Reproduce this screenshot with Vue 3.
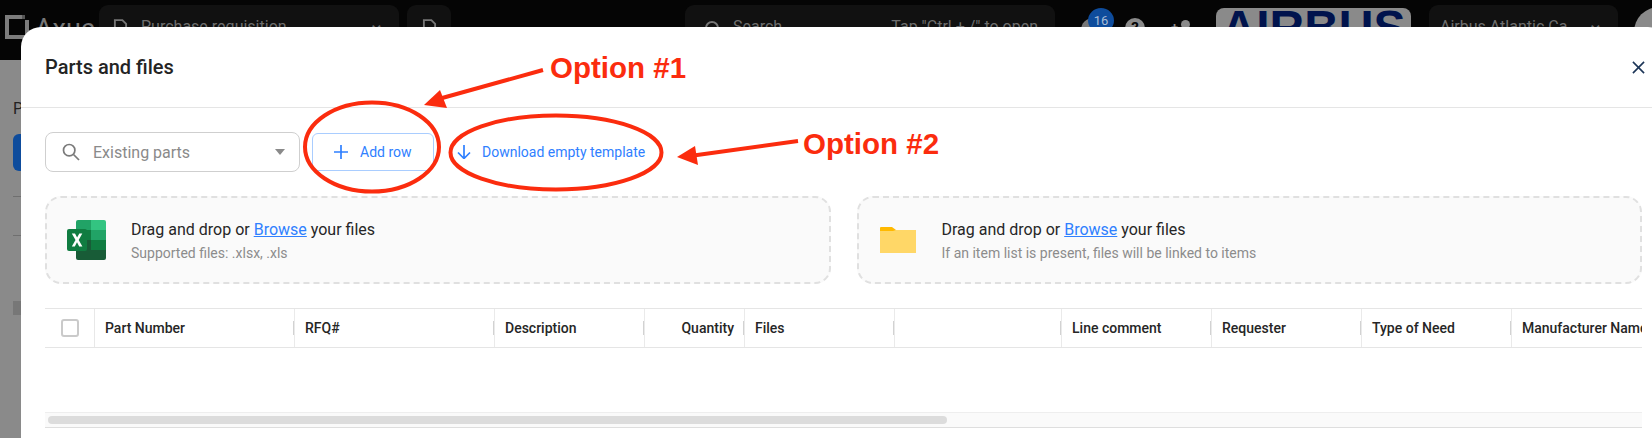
<script setup>
const columns = [
  { label: 'Part Number', width: 200 },
  { label: 'RFQ#', width: 200 },
  { label: 'Description', width: 150 },
  { label: 'Quantity', width: 100, right: true },
  { label: 'Files', width: 150 },
  { label: '', width: 167 },
  { label: 'Line comment', width: 150 },
  { label: 'Requester', width: 150 },
  { label: 'Type of Need', width: 150 },
  { label: 'Manufacturer Name', width: 150 },
]
</script>

<template>
  <div class="screen">
    <header class="topbar">
      <div class="brand">
        <svg class="brand-mark" viewBox="0 0 24 24">
          <path d="M0 0h17v4H4v16h16V5h4v19H0z" fill="#7c7c7c" />
          <path d="M17 0h3v4h-3z" fill="#555" />
        </svg>
        <span class="brand-name">Axua</span>
      </div>
      <div class="tab tab-main">
        <svg class="doc" viewBox="0 0 16 20"><path d="M2 1h8l4 4v14H2z" fill="none" stroke="#777" stroke-width="2" /></svg>
        <span>Purchase requisition</span>
        <span class="tab-chevron">⌄</span>
      </div>
      <div class="tab tab-new">
        <svg class="doc" viewBox="0 0 16 20"><path d="M2 1h8l4 4v14H2z" fill="none" stroke="#777" stroke-width="2" /></svg>
      </div>
      <div class="tab tab-search">
        <svg class="top-search" viewBox="0 0 18 18"><circle cx="8" cy="8" r="6" fill="none" stroke="#777" stroke-width="2" /></svg>
        <span>Search</span>
        <span class="search-hint">Tap "Ctrl + /" to open</span>
      </div>
      <div class="alerts">
        <span class="bell"></span>
        <span class="badge">16</span>
      </div>
      <span class="help">?</span>
      <span class="invite"><i></i><b>+</b></span>
      <div class="airbus">AIRBUS</div>
      <div class="tab tab-company">
        <span>Airbus Atlantic Ca</span>
        <span class="tab-chevron">⌄</span>
      </div>
      <span class="avatar"></span>
    </header>

    <aside class="page-behind">
      <span class="behind-letter">P</span>
      <span class="behind-button"></span>
      <span class="behind-line first"></span>
      <span class="behind-line second"></span>
      <span class="behind-chip"></span>
    </aside>

    <section class="modal">
      <div class="modal-head">
        <h2>Parts and files</h2>
        <svg class="close" viewBox="0 0 14 14"><path d="M1 1l12 12M13 1L1 13" /></svg>
      </div>

      <div class="modal-body">
        <div class="toolbar">
          <div class="select">
            <svg class="search-icon" viewBox="0 0 18 18"><circle cx="7.200" cy="7.200" r="5.700" /><path d="M11.500 11.500l5.500 5.500" /></svg>
            <span class="select-text">Existing parts</span>
            <span class="caret"></span>
          </div>
          <button class="add-row">
            <svg class="blue-icon plus" viewBox="0 0 14 14"><path d="M7 0v14M0 7h14" /></svg>
            Add row
          </button>
          <a class="download">
            <svg class="blue-icon arrow" viewBox="0 0 14 14"><path d="M7 0v13.500M1 7.500l6 6 6-6" /></svg>
            Download empty template
          </a>
        </div>

        <div class="drops">
          <div class="drop">
            <svg class="excel" viewBox="0 0 39 40">
              <path d="M9 2a2 2 0 0 1 2-2h13v10H9z" fill="#21a366" />
              <path d="M24 0h13a2 2 0 0 1 2 2v8H24z" fill="#33c481" />
              <rect x="24" y="10" width="15" height="10" fill="#21a366" />
              <rect x="9" y="10" width="15" height="10" fill="#107c41" />
              <rect x="24" y="20" width="15" height="10" fill="#107c41" />
              <path d="M9 30h30v8a2 2 0 0 1-2 2H11a2 2 0 0 1-2-2z" fill="#185c37" />
              <rect x="9" y="20" width="15" height="10" fill="#185c37" />
              <rect x="0" y="9" width="20" height="22" rx="2" fill="#107c41" />
              <path d="M4.800 13.500h3.200l2.100 4 2.200-4h3l-3.600 6.500 3.700 6.500h-3.200l-2.200-4.200-2.200 4.200h-3l3.700-6.500z" fill="#fff" />
            </svg>
            <div class="drop-copy">
              <p class="drop-title">Drag and drop or <a>Browse</a> your files</p>
              <p class="drop-sub">Supported files: .xlsx, .xls</p>
            </div>
          </div>
          <div class="drop folder-drop">
            <svg class="folder" viewBox="0 0 36 26">
              <path d="M0 1a1 1 0 0 1 1-1h11l4 3v3H0z" fill="#ffb900" />
              <path d="M0 4h13l3-1h20v23H0z" fill="#ffd767" />
            </svg>
            <div class="drop-copy">
              <p class="drop-title">Drag and drop or <a>Browse</a> your files</p>
              <p class="drop-sub">If an item list is present, files will be linked to items</p>
            </div>
          </div>
        </div>

        <div class="table">
          <div class="table-head">
            <div class="check-cell"><span class="checkbox"></span></div>
            <div
              v-for="col in columns"
              :key="col.label"
              class="cell"
              :class="{ right: col.right }"
              :style="{ width: col.width + 'px' }"
            >{{ col.label }}</div>
          </div>
          <div class="table-empty"></div>
          <div class="scroll-track"><div class="scroll-thumb"></div></div>
        </div>
      </div>
    </section>

    <div class="notes">
      <span class="note note-one">Option #1</span>
      <span class="note note-two">Option #2</span>
      <svg class="marks" viewBox="0 0 1652 438">
        <ellipse cx="372" cy="147" rx="67" ry="44.500" />
        <ellipse cx="556" cy="152.500" rx="105.500" ry="37" />
        <path d="M543 70L435 100" />
        <path class="head" d="M424 105L440 90L447 108z" />
        <path d="M798 141L690 156" />
        <path class="head" d="M677 157L695 146L698 165z" />
      </svg>
    </div>
  </div>
</template>

<style>
html, body { margin: 0; background: #888; }
</style>

<style scoped>
.screen {
  position: relative;
  width: 1652px;
  height: 438px;
  overflow: hidden;
  background: #8a8a8a;
  font-family: Roboto, "Liberation Sans", sans-serif;
  color: #252525;
}

.topbar {
  height: 60px;
  background: #050505;
  display: flex;
  align-items: flex-start;
  color: #6e6e6e;
  font-size: 16px;
}
.topbar > * { flex: none; }
.brand { display: flex; align-items: flex-start; margin: 15px 0 0 5px; width: 94px; gap: 6px; }
.brand-mark { width: 24px; height: 24px; flex: none; }
.brand-name { font-size: 27px; line-height: 28px; color: #777; }
.tab {
  box-sizing: border-box;
  height: 50px;
  margin-top: 5px;
  background: #111;
  border-radius: 9px;
  display: flex;
  align-items: flex-start;
  padding-top: 12px;
}
.doc { width: 15px; height: 19px; flex: none; margin-top: 2px; }
.tab-main { width: 300px; padding-left: 14px; gap: 13px; margin-right: 8px; }
.tab-chevron { margin-left: auto; margin-right: 14px; font-size: 20px; margin-top: -6px; }
.tab-new { width: 44px; justify-content: center; margin-right: 234px; }
.tab-search { width: 370px; padding-left: 19px; gap: 11px; }
.top-search { width: 18px; height: 18px; margin-top: 3px; }
.search-hint { margin-left: auto; margin-right: 17px; }
.alerts { position: relative; width: 49px; height: 27px; margin-left: 21px; }
.bell { position: absolute; left: 5px; top: 18px; width: 24px; height: 24px; border-radius: 50%; background: #777; }
.badge {
  position: absolute;
  left: 12px;
  top: 8px;
  width: 26px;
  height: 25px;
  border-radius: 50%;
  background: #0e4c9c;
  color: #a9bcd6;
  font-size: 13px;
  line-height: 25px;
  text-align: center;
}
.help {
  width: 20px;
  height: 20px;
  margin: 18px 0 0 0;
  border-radius: 50%;
  background: #8a8a8a;
  color: #050505;
  font-size: 15px;
  font-weight: 700;
  line-height: 20px;
  text-align: center;
}
.invite { position: relative; width: 20px; height: 20px; margin: 18px 0 0 26px; }
.invite i { position: absolute; left: 10px; top: 2px; width: 9px; height: 9px; border-radius: 50%; background: #8a8a8a; }
.invite b { position: absolute; left: 0; top: 2px; font-size: 13px; color: #8a8a8a; }
.airbus {
  width: 195px;
  height: 50px;
  margin: 8px 0 0 25px;
  border-radius: 8px;
  background: #8a8a8a;
  color: #00134d;
  font-family: "Liberation Sans", sans-serif;
  font-size: 48px;
  font-weight: 700;
  line-height: 40px;
  text-align: center;
}
.tab-company { width: 189px; margin-left: 18px; padding-left: 11px; }
.avatar { width: 50px; height: 50px; margin: 7px 0 0 16px; border-radius: 50%; background: #8a8a8a; }

.behind-letter { position: absolute; left: 13px; top: 99px; font-size: 16px; color: #222; }
.behind-button { position: absolute; left: 13px; top: 134px; width: 20px; height: 37px; border-radius: 6px; background: #0e4c9c; }
.behind-line { position: absolute; left: 13px; width: 10px; height: 1px; background: #6f6f6f; }
.behind-line.first { top: 196px; }
.behind-line.second { top: 235px; }
.behind-chip { position: absolute; left: 13px; top: 301px; width: 12px; height: 14px; background: #777; }

.modal {
  position: absolute;
  left: 21px;
  top: 27px;
  width: 1647px;
  height: 440px;
  background: #fff;
  border-radius: 20px;
  display: flex;
  flex-direction: column;
}
.modal-head {
  box-sizing: border-box;
  height: 81px;
  flex: none;
  padding: 0 6px 0 24px;
  border-bottom: 1px solid #e5e5e5;
  display: flex;
  align-items: center;
  justify-content: space-between;
}
.modal-head h2 { margin: 0; font-size: 20px; font-weight: 500; color: #242424; }
.close { width: 13px; height: 13px; margin-right: 17px; }
.close path { stroke: #1c3557; stroke-width: 1.700; fill: none; }

.modal-body { padding: 24px 26px 0 24px; width: 1597px; }

.toolbar { display: flex; align-items: center; height: 40px; }
.select {
  box-sizing: border-box;
  width: 255px;
  height: 40px;
  border: 1px solid #cfcfcf;
  border-radius: 8px;
  display: flex;
  align-items: center;
  padding: 0 14px 0 16px;
}
.search-icon { width: 18px; height: 18px; flex: none; }
.search-icon circle, .search-icon path { fill: none; stroke: #7a7a7a; stroke-width: 1.700; }
.select-text { margin-left: 13px; font-size: 16px; color: #8a8a8a; }
.caret {
  margin-left: auto;
  border-left: 5.500px solid transparent;
  border-right: 5.500px solid transparent;
  border-top: 6px solid #8a8a8a;
}
.add-row {
  box-sizing: border-box;
  width: 122px;
  height: 38px;
  margin-left: 12px;
  padding: 0 0 0 21px;
  border: 1px solid #a9cdff;
  border-radius: 6px;
  background: #fff;
  color: #2f80ff;
  font: 400 14px Roboto, sans-serif;
  display: flex;
  align-items: center;
  gap: 12px;
}
.blue-icon { flex: none; fill: none; }
.blue-icon path { stroke: #2f80ff; stroke-width: 1.700; fill: none; }
.plus { width: 14px; height: 14px; }
.arrow { width: 14px; height: 14px; }
.download {
  margin-left: 23px;
  display: flex;
  align-items: center;
  gap: 11px;
  color: #2f80ff;
  font-size: 14px;
}

.drops { display: grid; grid-template-columns: 1fr 1fr; gap: 26px; margin-top: 24px; }
.drop {
  box-sizing: border-box;
  height: 88px;
  border: 2px dashed #e0e0e0;
  border-radius: 16px;
  background: #fafafa;
  display: flex;
  align-items: center;
  padding-left: 20px;
}
.folder-drop { padding-left: 21px; }
.excel { width: 39px; height: 40px; flex: none; margin-right: 25px; }
.folder { width: 36px; height: 26px; flex: none; margin-right: 26px; }
.drop-copy { display: flex; flex-direction: column; gap: 5px; padding-top: 1px; }
.drop-title { margin: 0; font-size: 16px; line-height: 19px; color: #262626; }
.drop-title a { color: #2f80ff; text-decoration: underline; }
.drop-sub { margin: 0; font-size: 14px; line-height: 18px; color: #8c8c8c; }

.table { margin-top: 24px; overflow: hidden; }
.table-head {
  box-sizing: border-box;
  height: 40px;
  display: flex;
  border-top: 1px solid #e5e5e5;
  border-bottom: 1px solid #e5e5e5;
}
.check-cell {
  box-sizing: border-box;
  width: 50px;
  flex: none;
  border-right: 1px solid #e8e8e8;
  display: flex;
  align-items: center;
  padding-left: 16px;
}
.checkbox {
  box-sizing: border-box;
  width: 18px;
  height: 18px;
  border: 2px solid #cacaca;
  border-radius: 3px;
}
.cell {
  box-sizing: border-box;
  flex: none;
  position: relative;
  border-right: 1px solid #eaeaea;
  padding: 0 10px;
  font-size: 14px;
  font-weight: 500;
  line-height: 38px;
  white-space: nowrap;
  color: #262626;
}
.cell.right { text-align: right; }
.cell::after {
  content: "";
  position: absolute;
  right: 0;
  top: 12px;
  width: 1px;
  height: 14px;
  background: #d2d2d2;
}
.table-empty { height: 64px; }
.scroll-track {
  box-sizing: border-box;
  height: 16px;
  padding: 3px 3px 0;
  border-top: 1px solid #eeeeee;
  border-bottom: 1px solid #dedede;
  background: #fafafa;
}
.scroll-thumb { width: 899px; height: 8px; border-radius: 4px; background: #dcdcdc; }

.notes { position: absolute; inset: 0; pointer-events: none; }
.marks { position: absolute; inset: 0; width: 1652px; height: 438px; }
.marks ellipse { fill: none; stroke: #fb2c0e; stroke-width: 4; }
.marks path { fill: none; stroke: #fb2c0e; stroke-width: 4; }
.marks path.head { fill: #fb2c0e; stroke: none; }
.note {
  position: absolute;
  font-family: "Liberation Sans", sans-serif;
  font-size: 29.500px;
  font-weight: 700;
  line-height: 34px;
  color: #fb2c0e;
}
.note-one { left: 550px; top: 51px; }
.note-two { left: 803px; top: 127px; }
</style>
